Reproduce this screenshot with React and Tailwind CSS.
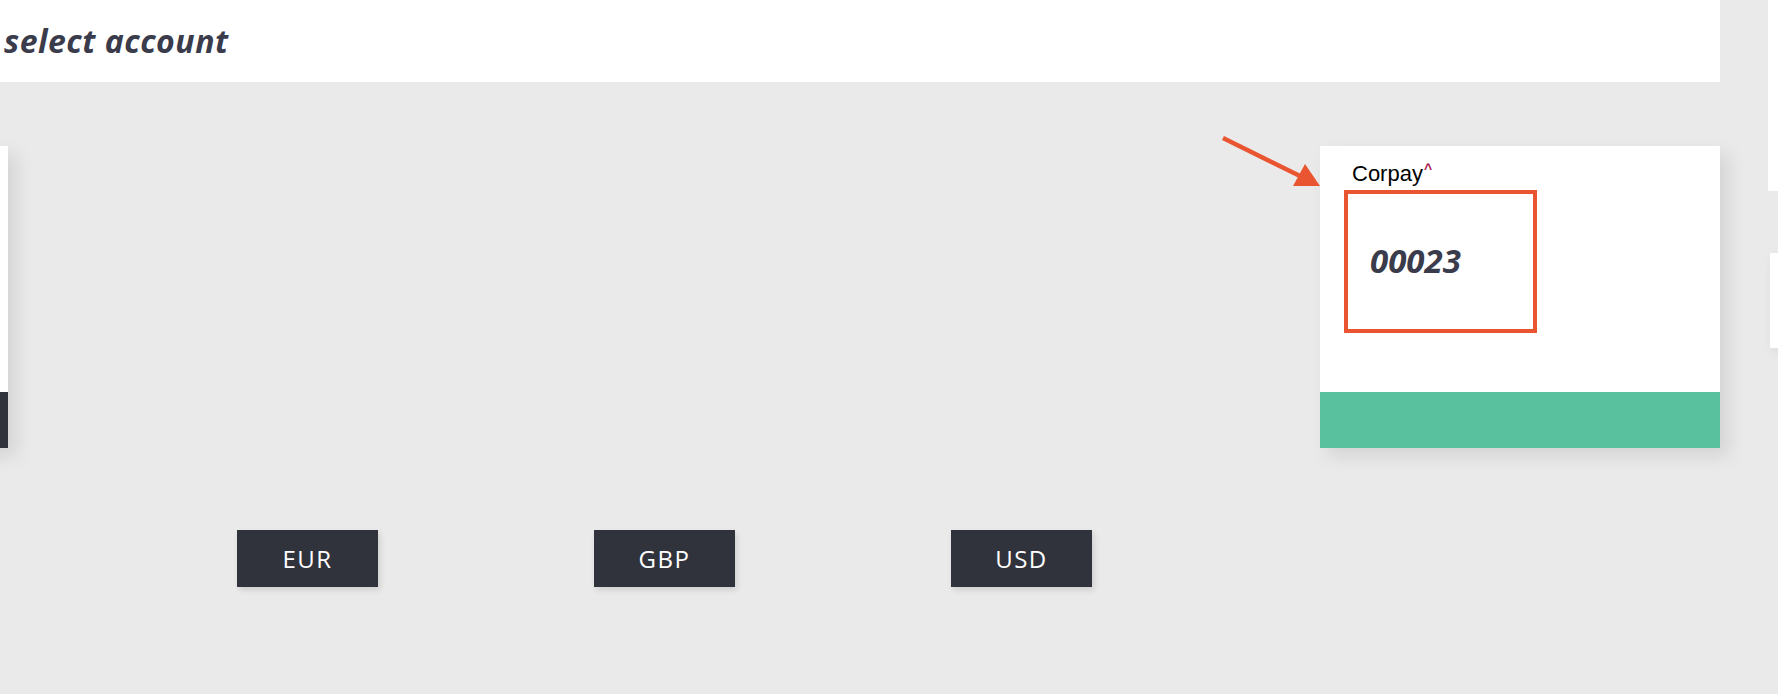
import React from "react";

const font = { fontFamily: '"Open Sans", "Liberation Sans", sans-serif' };

function Arrow() {
  // flèche orange d'annotation
  return (
    <svg
      className="absolute left-[1218px] top-[132px]"
      width="106"
      height="58"
      viewBox="0 0 106 58"
    >
      <line x1="5" y1="6" x2="82" y2="44" stroke="#ea5531" strokeWidth="4.5" />
      <polygon points="102,54 75,54 87,32" fill="#ea5531" />
    </svg>
  );
}

function CurrencyButton({ label }) {
  return (
    <div className="w-[141px] h-[57px] bg-[#30323c] flex items-center justify-center text-white text-[24px] tracking-[1.5px] shadow-[2px_3px_6px_rgba(0,0,0,0.12)]">
      {label}
    </div>
  );
}

export default function App() {
  return (
    <div
      className="relative w-full h-[694px] bg-[#eaeaea] overflow-hidden flex"
      style={font}
    >
      {/* colonne principale */}
      <div className="w-[1720px] shrink-0 flex flex-col">
        <div className="h-[82px] bg-white flex items-center pl-[4px]">
          <h1 className="text-[32px] leading-none font-bold italic text-[#3a3b4b] tracking-[0.5px]">
            select account
          </h1>
        </div>

        {/* cartes */}
        <div className="mt-[64px] flex justify-between">
          <div className="w-[400px] h-[302px] ml-[-392px] bg-white flex flex-col justify-end shadow-[8px_8px_18px_rgba(0,0,0,0.1)]">
            <div className="h-[56px] bg-[#30323c]" />
          </div>

          <div className="w-[400px] h-[302px] bg-white flex flex-col shadow-[8px_8px_18px_rgba(0,0,0,0.1)]">
            <div className="flex-1 pl-[24px] pt-[17px]">
              <div
                className="ml-[8px] text-[22px] leading-[22px] text-black flex items-start"
                style={{ fontFamily: '"Liberation Sans", Arial, sans-serif' }}
              >
                Corpay
                <span className="text-[14px] leading-[13px] font-bold text-[#a8174a] ml-[1px]">
                  ^
                </span>
              </div>
              <div className="mt-[5px] w-[193px] h-[143px] border-[4px] border-[#ea5531] flex items-center pl-[22px] pb-[3px]">
                <span className="text-[33px] leading-none font-bold italic text-[#3a3b4b]">
                  00023
                </span>
              </div>
            </div>
            <div className="h-[56px] bg-[#5ac19e]" />
          </div>
        </div>

        {/* devises */}
        <div className="mt-[82px] pl-[237px] flex gap-[216px]">
          <CurrencyButton label="EUR" />
          <CurrencyButton label="GBP" />
          <CurrencyButton label="USD" />
        </div>
      </div>

      {/* colonne de droite coupée */}
      <div className="ml-[48px] w-[10px] shrink-0 flex flex-col">
        <div className="h-[191px] bg-white" />
        <div className="mt-[62px] ml-[2px] h-[95px] bg-white shadow-[4px_4px_12px_rgba(0,0,0,0.1)]" />
      </div>

      <Arrow />
    </div>
  );
}
